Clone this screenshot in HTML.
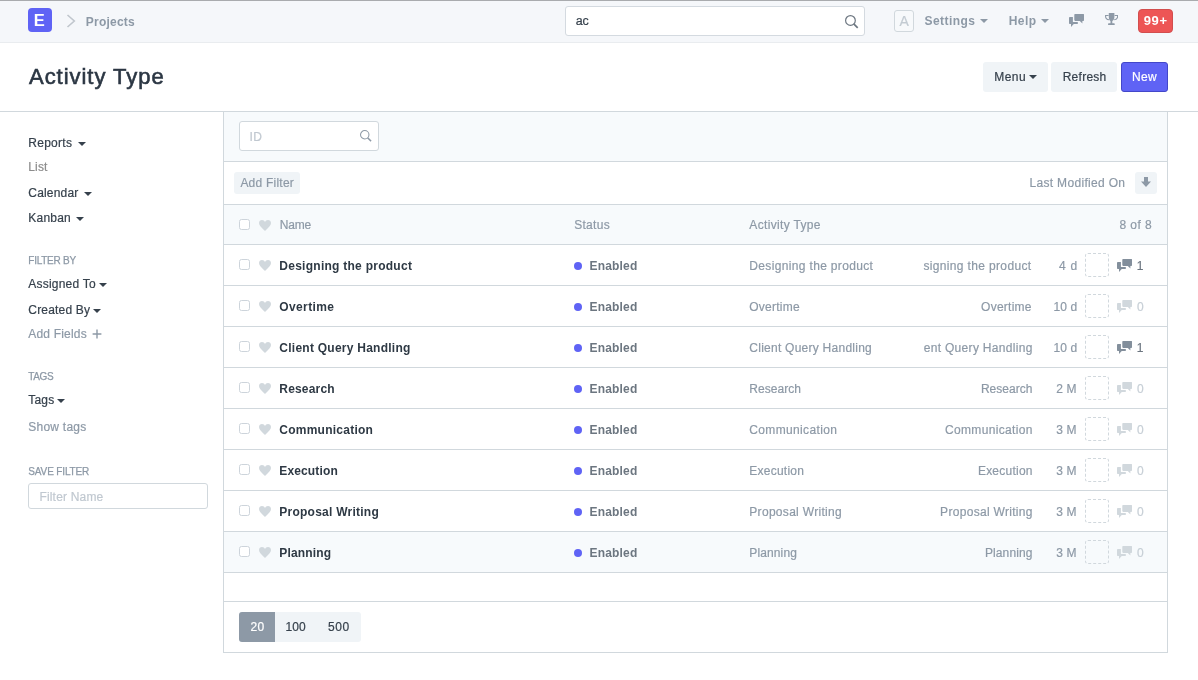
<!DOCTYPE html>
<html><head><meta charset="utf-8"><title>Activity Type</title>
<style>
*{box-sizing:border-box;margin:0;padding:0}
html,body{width:1198px;height:680px;overflow:hidden;background:#fff;font-family:"Liberation Sans",sans-serif;color:#36414c;font-size:12px}
.a{position:absolute}
.t{position:absolute;white-space:nowrap;line-height:1;display:block}
#nav{position:absolute;left:0;top:0;width:1198px;height:43px;background:#f5f7fa;border-top:1px solid #a9abae;border-bottom:1px solid #e9ecef}
#logo{position:absolute;left:28px;top:8px;width:24px;height:24px;border-radius:4px;background:#5f63f5}
#hdr{position:absolute;left:0;top:43px;width:1198px;height:69px;border-bottom:1px solid #d1d8dd;background:#fff}
.btn{position:absolute;border-radius:3px;background:#f0f4f7}
.inp{position:absolute;border:1px solid #d1d8dd;border-radius:3px;background:#fff}
.hl{position:absolute;left:224px;width:943px;height:1px;background:#d1d8dd}
.bg{position:absolute;left:224px;width:943px;background:#f7fafc}
.cb{position:absolute;left:239px;width:11px;height:11px;border:1px solid #cdd4db;border-radius:2.5px;background:#fff}
.dot{position:absolute;left:574px;width:8px;height:8px;border-radius:50%;background:#5f63f5}
.dash{position:absolute;left:1085px;width:24px;height:24px;border:1px dashed #d1d8dd;border-radius:3px}
.car{position:absolute;width:0;height:0;border-left:4px solid transparent;border-right:4px solid transparent;border-top:4px solid #36414c}
#clip{position:absolute;left:0;top:0;width:1198px;height:680px;clip-path:inset(0 0 0 900px)}
</style></head><body>
<div id="nav"></div>
<div id="logo"></div>
<svg class="a" style="left:66px;top:14px" width="10" height="14" viewBox="0 0 10 14"><path d="M1.500 1 L8.300 7 L1.500 13" fill="none" stroke="#c0c6cd" stroke-width="1.600"/></svg>
<div class="inp" style="left:565px;top:6px;width:300px;height:30px;border-color:#d4dae0"></div>
<svg class="a" style="left:845px;top:15.100px;fill:none;stroke:#6c7680" width="14" height="14" viewBox="0 0 14 14"><circle cx="5.450" cy="5.450" r="4.850" fill="none" stroke-width="1.200"/><path d="M8.700 8.900l4 3.900" fill="none" stroke-width="1.700"/></svg>
<div class="a" style="left:894px;top:10px;width:20px;height:22px;border:1px solid #d1d8dd;border-radius:3px;background:#f7f9fb"></div>
<div class="car" style="left:980px;top:19px;border-top-color:#8d99a6"></div>
<div class="car" style="left:1041px;top:19px;border-top-color:#8d99a6"></div>
<svg class="a" style="left:1069px;top:14px;fill:#8d99a6" width="15.400" height="13" viewBox="0 0 15.400 13"><rect x="5.300" y="0" width="9.800" height="6.900" rx=".8"/><path d="M10.300 6.500h3.100v2.900z"/><path d="M.8 3.100h3.100v4.800h4.900v2.100H.8A.8.800 0 0 1 0 9.200V3.900a.8.800 0 0 1 .8-.8z"/><path d="M2 9.600h3.200L2 12.900z"/></svg>
<svg class="a" style="left:1105px;top:12.900px" width="13.200" height="12" viewBox="0 0 13.200 12"><path d="M3.800 0h5.600v4.200c0 2-1.200 3.300-2.100 3.800v2.200h1.800c.3 0 .6.300.6.600V12H3.100v-1.200c0-.3.300-.6.600-.6h1.800V8C4.600 7.500 3.800 6.200 3.800 4.200z" fill="#8d99a6"/><path d="M3.600 2.500H.6v1c0 1.600 1.400 3 3.400 3.300M9.600 2.500h3v1c0 1.600-1.400 3-3.400 3.300" fill="none" stroke="#8d99a6" stroke-width="1.100"/></svg>
<div class="a" style="left:1138px;top:9px;width:35px;height:24px;border-radius:4px;background:#ed5555;border:1px solid #d24e4e"></div>

<div id="hdr"></div>
<div class="btn" style="left:983px;top:62px;width:65px;height:30px"></div>
<div class="car" style="left:1029px;top:75px"></div>
<div class="btn" style="left:1051px;top:62px;width:66px;height:30px"></div>
<div class="btn" style="left:1121px;top:62px;width:47px;height:30px;background:#5f63f5;border:1px solid #4347c9"></div>

<!-- sidebar -->
<div class="car" style="left:78px;top:142px"></div>
<div class="car" style="left:84px;top:192px"></div>
<div class="car" style="left:76px;top:217px"></div>
<div class="car" style="left:99px;top:283px"></div>
<div class="car" style="left:93px;top:309px"></div>
<div class="car" style="left:57px;top:399px"></div>
<svg class="a" style="left:92.200px;top:329px" width="10" height="10" viewBox="0 0 10 10"><path d="M5 .6v8.800M.6 5h8.800" stroke="#8d99a6" stroke-width="1.400" fill="none"/></svg>
<div class="inp" style="left:28px;top:483px;width:180px;height:26px"></div>

<!-- main panel -->
<div class="a" style="left:223px;top:112px;width:1px;height:541px;background:#d1d8dd"></div>
<div class="a" style="left:1167px;top:112px;width:1px;height:541px;background:#d1d8dd"></div>
<div class="bg" style="top:112px;height:49px"></div>
<div class="bg" style="top:205px;height:39px"></div>
<div class="bg" style="top:532px;height:40px"></div>
<div class="hl" style="top:161px"></div>
<div class="hl" style="top:204px"></div>
<div class="hl" style="top:244px"></div>
<div class="hl" style="top:285px"></div>
<div class="hl" style="top:326px"></div>
<div class="hl" style="top:367px"></div>
<div class="hl" style="top:408px"></div>
<div class="hl" style="top:449px"></div>
<div class="hl" style="top:490px"></div>
<div class="hl" style="top:531px"></div>
<div class="hl" style="top:572px"></div>
<div class="hl" style="top:601px"></div>
<div class="hl" style="top:652px;left:223px;width:945px"></div>

<div class="inp" style="left:239px;top:121px;width:140px;height:30px"></div>
<svg class="a" style="left:359.700px;top:130.400px;fill:none;stroke:#8d99a6" width="12.200" height="12.200" viewBox="0 0 14 14"><circle cx="5.450" cy="5.450" r="4.850" fill="none" stroke-width="1.200"/><path d="M8.700 8.900l4 3.900" fill="none" stroke-width="1.700"/></svg>
<div class="btn" style="left:234px;top:172px;width:66px;height:22px"></div>
<div class="btn" style="left:1135px;top:172px;width:22px;height:22px"></div>
<svg class="a" style="left:1141px;top:177px" width="10" height="10" viewBox="0 0 10 10"><path d="M3 0h4v4.400h3L5 10 0 4.400h3z" fill="#8d99a6"/></svg>

<div class="cb" style="top:219px"></div>
<svg class="a" style="left:259px;top:219.500px;fill:#d1d8dd" width="12" height="11" viewBox="0 0 12 11"><path d="M6 11C2.2 7.6 0 5.5 0 3.1 0 1.2 1.3 0 3 0c1.400 0 2.500.8 3 2C6.500.8 7.600 0 9 0c1.700 0 3 1.200 3 3.100 0 2.400-2.200 4.500-6 7.900z"/></svg>
<div class="cb" style="top:259px"></div>
<svg class="a" style="left:259px;top:260px;fill:#d1d8dd" width="12" height="11" viewBox="0 0 12 11"><path d="M6 11C2.2 7.6 0 5.5 0 3.1 0 1.2 1.3 0 3 0c1.400 0 2.500.8 3 2C6.500.8 7.600 0 9 0c1.700 0 3 1.200 3 3.100 0 2.400-2.200 4.500-6 7.900z"/></svg>
<div class="dot" style="top:262px"></div>
<div class="dash" style="top:253px"></div>
<svg class="a" style="left:1117px;top:259px;fill:#838f9c" width="15.4" height="13" viewBox="0 0 15.400 13"><rect x="5.300" y="0" width="9.800" height="6.900" rx=".8"/><path d="M10.300 6.500h3.100v2.900z"/><path d="M.8 3.100h3.100v4.800h4.900v2.100H.8A.8.800 0 0 1 0 9.200V3.900a.8.800 0 0 1 .8-.8z"/><path d="M2 9.600h3.200L2 12.900z"/></svg>
<div class="cb" style="top:300px"></div>
<svg class="a" style="left:259px;top:301px;fill:#d1d8dd" width="12" height="11" viewBox="0 0 12 11"><path d="M6 11C2.2 7.6 0 5.5 0 3.1 0 1.2 1.3 0 3 0c1.400 0 2.500.8 3 2C6.500.8 7.600 0 9 0c1.700 0 3 1.200 3 3.100 0 2.400-2.200 4.500-6 7.900z"/></svg>
<div class="dot" style="top:303px"></div>
<div class="dash" style="top:294px"></div>
<svg class="a" style="left:1117px;top:300px;fill:#d1d8dd" width="15.4" height="13" viewBox="0 0 15.400 13"><rect x="5.300" y="0" width="9.800" height="6.900" rx=".8"/><path d="M10.300 6.500h3.100v2.900z"/><path d="M.8 3.100h3.100v4.800h4.900v2.100H.8A.8.800 0 0 1 0 9.200V3.900a.8.800 0 0 1 .8-.8z"/><path d="M2 9.600h3.200L2 12.900z"/></svg>
<div class="cb" style="top:341px"></div>
<svg class="a" style="left:259px;top:342px;fill:#d1d8dd" width="12" height="11" viewBox="0 0 12 11"><path d="M6 11C2.2 7.6 0 5.5 0 3.1 0 1.2 1.3 0 3 0c1.400 0 2.500.8 3 2C6.500.8 7.600 0 9 0c1.700 0 3 1.200 3 3.100 0 2.400-2.200 4.500-6 7.900z"/></svg>
<div class="dot" style="top:344px"></div>
<div class="dash" style="top:335px"></div>
<svg class="a" style="left:1117px;top:341px;fill:#838f9c" width="15.4" height="13" viewBox="0 0 15.400 13"><rect x="5.300" y="0" width="9.800" height="6.900" rx=".8"/><path d="M10.300 6.500h3.100v2.900z"/><path d="M.8 3.100h3.100v4.800h4.900v2.100H.8A.8.800 0 0 1 0 9.200V3.900a.8.800 0 0 1 .8-.8z"/><path d="M2 9.600h3.200L2 12.900z"/></svg>
<div class="cb" style="top:382px"></div>
<svg class="a" style="left:259px;top:383px;fill:#d1d8dd" width="12" height="11" viewBox="0 0 12 11"><path d="M6 11C2.2 7.6 0 5.5 0 3.1 0 1.2 1.3 0 3 0c1.400 0 2.500.8 3 2C6.500.8 7.600 0 9 0c1.700 0 3 1.200 3 3.100 0 2.400-2.200 4.500-6 7.900z"/></svg>
<div class="dot" style="top:385px"></div>
<div class="dash" style="top:376px"></div>
<svg class="a" style="left:1117px;top:382px;fill:#d1d8dd" width="15.4" height="13" viewBox="0 0 15.400 13"><rect x="5.300" y="0" width="9.800" height="6.900" rx=".8"/><path d="M10.300 6.500h3.100v2.900z"/><path d="M.8 3.100h3.100v4.800h4.900v2.100H.8A.8.800 0 0 1 0 9.200V3.900a.8.800 0 0 1 .8-.8z"/><path d="M2 9.600h3.200L2 12.900z"/></svg>
<div class="cb" style="top:423px"></div>
<svg class="a" style="left:259px;top:424px;fill:#d1d8dd" width="12" height="11" viewBox="0 0 12 11"><path d="M6 11C2.2 7.6 0 5.5 0 3.1 0 1.2 1.3 0 3 0c1.400 0 2.500.8 3 2C6.500.8 7.600 0 9 0c1.700 0 3 1.200 3 3.100 0 2.400-2.200 4.500-6 7.900z"/></svg>
<div class="dot" style="top:426px"></div>
<div class="dash" style="top:417px"></div>
<svg class="a" style="left:1117px;top:423px;fill:#d1d8dd" width="15.4" height="13" viewBox="0 0 15.400 13"><rect x="5.300" y="0" width="9.800" height="6.900" rx=".8"/><path d="M10.300 6.500h3.100v2.900z"/><path d="M.8 3.100h3.100v4.800h4.900v2.100H.8A.8.800 0 0 1 0 9.200V3.900a.8.800 0 0 1 .8-.8z"/><path d="M2 9.600h3.200L2 12.900z"/></svg>
<div class="cb" style="top:464px"></div>
<svg class="a" style="left:259px;top:465px;fill:#d1d8dd" width="12" height="11" viewBox="0 0 12 11"><path d="M6 11C2.2 7.6 0 5.5 0 3.1 0 1.2 1.3 0 3 0c1.400 0 2.500.8 3 2C6.500.8 7.600 0 9 0c1.700 0 3 1.200 3 3.100 0 2.400-2.200 4.500-6 7.900z"/></svg>
<div class="dot" style="top:467px"></div>
<div class="dash" style="top:458px"></div>
<svg class="a" style="left:1117px;top:464px;fill:#d1d8dd" width="15.4" height="13" viewBox="0 0 15.400 13"><rect x="5.300" y="0" width="9.800" height="6.900" rx=".8"/><path d="M10.300 6.500h3.100v2.900z"/><path d="M.8 3.100h3.100v4.800h4.900v2.100H.8A.8.800 0 0 1 0 9.200V3.900a.8.800 0 0 1 .8-.8z"/><path d="M2 9.600h3.200L2 12.900z"/></svg>
<div class="cb" style="top:505px"></div>
<svg class="a" style="left:259px;top:506px;fill:#d1d8dd" width="12" height="11" viewBox="0 0 12 11"><path d="M6 11C2.2 7.6 0 5.5 0 3.1 0 1.2 1.3 0 3 0c1.400 0 2.500.8 3 2C6.500.8 7.600 0 9 0c1.700 0 3 1.200 3 3.100 0 2.400-2.200 4.500-6 7.900z"/></svg>
<div class="dot" style="top:508px"></div>
<div class="dash" style="top:499px"></div>
<svg class="a" style="left:1117px;top:505px;fill:#d1d8dd" width="15.4" height="13" viewBox="0 0 15.400 13"><rect x="5.300" y="0" width="9.800" height="6.900" rx=".8"/><path d="M10.300 6.500h3.100v2.900z"/><path d="M.8 3.100h3.100v4.800h4.900v2.100H.8A.8.800 0 0 1 0 9.200V3.900a.8.800 0 0 1 .8-.8z"/><path d="M2 9.600h3.200L2 12.900z"/></svg>
<div class="cb" style="top:546px"></div>
<svg class="a" style="left:259px;top:547px;fill:#d1d8dd" width="12" height="11" viewBox="0 0 12 11"><path d="M6 11C2.2 7.6 0 5.5 0 3.1 0 1.2 1.3 0 3 0c1.400 0 2.500.8 3 2C6.500.8 7.600 0 9 0c1.700 0 3 1.200 3 3.100 0 2.400-2.200 4.500-6 7.900z"/></svg>
<div class="dot" style="top:549px"></div>
<div class="dash" style="top:540px"></div>
<svg class="a" style="left:1117px;top:546px;fill:#d1d8dd" width="15.4" height="13" viewBox="0 0 15.400 13"><rect x="5.300" y="0" width="9.800" height="6.900" rx=".8"/><path d="M10.300 6.500h3.100v2.900z"/><path d="M.8 3.100h3.100v4.800h4.900v2.100H.8A.8.800 0 0 1 0 9.200V3.900a.8.800 0 0 1 .8-.8z"/><path d="M2 9.600h3.200L2 12.900z"/></svg>

<div class="btn" style="left:239px;top:612px;width:122px;height:30px"></div>
<div class="btn" style="left:239px;top:612px;width:36px;height:30px;background:#8d99a6;border-radius:3px 0 0 3px"></div>

<div id="tl" style="position:absolute;left:0;top:0;width:1198px;height:680px;will-change:transform">
<span class="t" style="left:85.80px;top:16.10px;font-size:12px;color:#8d99a6;letter-spacing:0.217px;font-weight:bold">Projects</span>
<span class="t" style="left:575.70px;top:15.35px;font-size:12.5px;color:#36414c;letter-spacing:-0.052px;-webkit-text-stroke:0.2px #36414c">ac</span>
<span class="t" style="left:924.60px;top:15.20px;font-size:12px;color:#8d99a6;letter-spacing:0.419px;font-weight:bold">Settings</span>
<span class="t" style="left:1008.70px;top:15.20px;font-size:12px;color:#8d99a6;letter-spacing:0.475px;font-weight:bold">Help</span>
<span class="t" style="left:1143.70px;top:14.20px;font-size:13px;color:#fff;letter-spacing:0.620px;font-weight:bold">99+</span>
<span class="t" style="left:899.50px;top:14.00px;font-size:14px;color:#c3cbd2;letter-spacing:0.000px;-webkit-text-stroke:0.2px #c3cbd2">A</span>
<span class="t" style="left:33.70px;top:11.85px;font-size:16.5px;color:#fff;letter-spacing:0.000px;font-weight:bold">E</span>
<span class="t" style="left:29.00px;top:66.10px;font-size:22px;color:#2b3643;letter-spacing:0.963px;-webkit-text-stroke:0.6px #2b3643">Activity Type</span>
<span class="t" style="left:994.20px;top:71.20px;font-size:12px;color:#36414c;letter-spacing:0.485px;-webkit-text-stroke:0.2px #36414c">Menu</span>
<span class="t" style="left:1062.70px;top:71.20px;font-size:12px;color:#36414c;letter-spacing:0.259px;-webkit-text-stroke:0.2px #36414c">Refresh</span>
<span class="t" style="left:1132.00px;top:71.20px;font-size:12px;color:#fff;letter-spacing:0.330px;-webkit-text-stroke:0.2px #fff">New</span>
<span class="t" style="left:28.30px;top:137.00px;font-size:12px;color:#36414c;letter-spacing:0.264px;-webkit-text-stroke:0.2px #36414c">Reports</span>
<span class="t" style="left:28.30px;top:160.90px;font-size:12px;color:#8c8c8c;letter-spacing:0.120px;-webkit-text-stroke:0.2px #8c8c8c">List</span>
<span class="t" style="left:28.30px;top:187.10px;font-size:12px;color:#36414c;letter-spacing:0.186px;-webkit-text-stroke:0.2px #36414c">Calendar</span>
<span class="t" style="left:28.30px;top:211.60px;font-size:12px;color:#36414c;letter-spacing:0.220px;-webkit-text-stroke:0.2px #36414c">Kanban</span>
<span class="t" style="left:28.30px;top:255.50px;font-size:10px;color:#8d99a6;letter-spacing:-0.257px;-webkit-text-stroke:0.25px #8d99a6">FILTER BY</span>
<span class="t" style="left:28.30px;top:278.20px;font-size:12px;color:#36414c;letter-spacing:0.210px;-webkit-text-stroke:0.2px #36414c">Assigned To</span>
<span class="t" style="left:28.30px;top:304.00px;font-size:12px;color:#36414c;letter-spacing:0.186px;-webkit-text-stroke:0.2px #36414c">Created By</span>
<span class="t" style="left:28.30px;top:327.80px;font-size:12px;color:#8d99a6;letter-spacing:0.189px;-webkit-text-stroke:0.2px #8d99a6">Add Fields</span>
<span class="t" style="left:28.30px;top:371.80px;font-size:10px;color:#8d99a6;letter-spacing:-0.371px;-webkit-text-stroke:0.25px #8d99a6">TAGS</span>
<span class="t" style="left:28.30px;top:394.00px;font-size:12px;color:#36414c;letter-spacing:0.184px;-webkit-text-stroke:0.2px #36414c">Tags</span>
<span class="t" style="left:28.30px;top:420.90px;font-size:12px;color:#8d99a6;letter-spacing:0.233px;-webkit-text-stroke:0.2px #8d99a6">Show tags</span>
<span class="t" style="left:28.30px;top:466.50px;font-size:10px;color:#8d99a6;letter-spacing:-0.140px;-webkit-text-stroke:0.25px #8d99a6">SAVE FILTER</span>
<span class="t" style="left:39.40px;top:491.00px;font-size:12px;color:#c0c8d0;letter-spacing:0.186px;-webkit-text-stroke:0.2px #c0c8d0">Filter Name</span>
<span class="t" style="left:249.50px;top:131.00px;font-size:12px;color:#c0c8d0;letter-spacing:0.366px;-webkit-text-stroke:0.2px #c0c8d0">ID</span>
<span class="t" style="left:240.40px;top:177.30px;font-size:12px;color:#8d99a6;letter-spacing:0.227px;-webkit-text-stroke:0.2px #8d99a6">Add Filter</span>
<span class="t" style="left:1029.50px;top:177.30px;font-size:12px;color:#8d99a6;letter-spacing:0.317px;-webkit-text-stroke:0.2px #8d99a6">Last Modified On</span>
<span class="t" style="left:279.70px;top:219.30px;font-size:12px;color:#8d99a6;letter-spacing:-0.179px;-webkit-text-stroke:0.2px #8d99a6">Name</span>
<span class="t" style="left:574.20px;top:219.30px;font-size:12px;color:#8d99a6;letter-spacing:0.296px;-webkit-text-stroke:0.2px #8d99a6">Status</span>
<span class="t" style="left:749.30px;top:219.30px;font-size:12px;color:#8d99a6;letter-spacing:0.335px;-webkit-text-stroke:0.2px #8d99a6">Activity Type</span>
<span class="t" style="left:1119.50px;top:219.30px;font-size:12px;color:#8d99a6;letter-spacing:0.430px;-webkit-text-stroke:0.2px #8d99a6">8 of 8</span>
<span class="t" style="left:250.40px;top:621.00px;font-size:12px;color:#fff;letter-spacing:0.426px;-webkit-text-stroke:0.2px #fff">20</span>
<span class="t" style="left:285.60px;top:621.00px;font-size:12px;color:#36414c;letter-spacing:0.076px;-webkit-text-stroke:0.2px #36414c">100</span>
<span class="t" style="left:328.00px;top:621.00px;font-size:12px;color:#36414c;letter-spacing:0.626px;-webkit-text-stroke:0.2px #36414c">500</span>
<span class="t" style="left:279.30px;top:260.30px;font-size:12px;color:#2e3944;letter-spacing:0.263px;font-weight:bold">Designing the product</span>
<span class="t" style="left:589.50px;top:260.30px;font-size:12px;color:#6c7680;letter-spacing:0.176px;font-weight:bold">Enabled</span>
<span class="t" style="left:749.30px;top:260.30px;font-size:12px;color:#8d99a6;letter-spacing:0.345px;-webkit-text-stroke:0.2px #8d99a6">Designing the product</span>
<span class="t" style="left:1059.00px;top:260.30px;font-size:12px;color:#8d99a6;letter-spacing:0.746px;-webkit-text-stroke:0.2px #8d99a6">4 d</span>
<span class="t" style="left:1136.80px;top:260.30px;font-size:12px;color:#6c7680;letter-spacing:0.000px;-webkit-text-stroke:0.2px #6c7680">1</span>
<span class="t" style="left:279.30px;top:301.30px;font-size:12px;color:#2e3944;letter-spacing:0.378px;font-weight:bold">Overtime</span>
<span class="t" style="left:589.50px;top:301.30px;font-size:12px;color:#6c7680;letter-spacing:0.176px;font-weight:bold">Enabled</span>
<span class="t" style="left:749.30px;top:301.30px;font-size:12px;color:#8d99a6;letter-spacing:0.243px;-webkit-text-stroke:0.2px #8d99a6">Overtime</span>
<span class="t" style="left:1053.50px;top:301.30px;font-size:12px;color:#8d99a6;letter-spacing:0.106px;-webkit-text-stroke:0.2px #8d99a6">10 d</span>
<span class="t" style="left:1136.90px;top:301.30px;font-size:12px;color:#c7cfd6;letter-spacing:0.000px;-webkit-text-stroke:0.2px #c7cfd6">0</span>
<span class="t" style="left:279.30px;top:342.30px;font-size:12px;color:#2e3944;letter-spacing:0.251px;font-weight:bold">Client Query Handling</span>
<span class="t" style="left:589.50px;top:342.30px;font-size:12px;color:#6c7680;letter-spacing:0.176px;font-weight:bold">Enabled</span>
<span class="t" style="left:749.30px;top:342.30px;font-size:12px;color:#8d99a6;letter-spacing:0.254px;-webkit-text-stroke:0.2px #8d99a6">Client Query Handling</span>
<span class="t" style="left:1053.50px;top:342.30px;font-size:12px;color:#8d99a6;letter-spacing:0.106px;-webkit-text-stroke:0.2px #8d99a6">10 d</span>
<span class="t" style="left:1136.80px;top:342.30px;font-size:12px;color:#6c7680;letter-spacing:0.000px;-webkit-text-stroke:0.2px #6c7680">1</span>
<span class="t" style="left:279.30px;top:383.30px;font-size:12px;color:#2e3944;letter-spacing:0.185px;font-weight:bold">Research</span>
<span class="t" style="left:589.50px;top:383.30px;font-size:12px;color:#6c7680;letter-spacing:0.176px;font-weight:bold">Enabled</span>
<span class="t" style="left:749.30px;top:383.30px;font-size:12px;color:#8d99a6;letter-spacing:0.031px;-webkit-text-stroke:0.2px #8d99a6">Research</span>
<span class="t" style="left:1056.30px;top:383.30px;font-size:12px;color:#8d99a6;letter-spacing:0.096px;-webkit-text-stroke:0.2px #8d99a6">2 M</span>
<span class="t" style="left:1136.90px;top:383.30px;font-size:12px;color:#c7cfd6;letter-spacing:0.000px;-webkit-text-stroke:0.2px #c7cfd6">0</span>
<span class="t" style="left:279.30px;top:424.30px;font-size:12px;color:#2e3944;letter-spacing:0.247px;font-weight:bold">Communication</span>
<span class="t" style="left:589.50px;top:424.30px;font-size:12px;color:#6c7680;letter-spacing:0.176px;font-weight:bold">Enabled</span>
<span class="t" style="left:749.30px;top:424.30px;font-size:12px;color:#8d99a6;letter-spacing:0.351px;-webkit-text-stroke:0.2px #8d99a6">Communication</span>
<span class="t" style="left:1056.30px;top:424.30px;font-size:12px;color:#8d99a6;letter-spacing:0.096px;-webkit-text-stroke:0.2px #8d99a6">3 M</span>
<span class="t" style="left:1136.90px;top:424.30px;font-size:12px;color:#c7cfd6;letter-spacing:0.000px;-webkit-text-stroke:0.2px #c7cfd6">0</span>
<span class="t" style="left:279.30px;top:465.30px;font-size:12px;color:#2e3944;letter-spacing:0.136px;font-weight:bold">Execution</span>
<span class="t" style="left:589.50px;top:465.30px;font-size:12px;color:#6c7680;letter-spacing:0.176px;font-weight:bold">Enabled</span>
<span class="t" style="left:749.30px;top:465.30px;font-size:12px;color:#8d99a6;letter-spacing:0.234px;-webkit-text-stroke:0.2px #8d99a6">Execution</span>
<span class="t" style="left:1056.30px;top:465.30px;font-size:12px;color:#8d99a6;letter-spacing:0.096px;-webkit-text-stroke:0.2px #8d99a6">3 M</span>
<span class="t" style="left:1136.90px;top:465.30px;font-size:12px;color:#c7cfd6;letter-spacing:0.000px;-webkit-text-stroke:0.2px #c7cfd6">0</span>
<span class="t" style="left:279.30px;top:506.30px;font-size:12px;color:#2e3944;letter-spacing:0.243px;font-weight:bold">Proposal Writing</span>
<span class="t" style="left:589.50px;top:506.30px;font-size:12px;color:#6c7680;letter-spacing:0.176px;font-weight:bold">Enabled</span>
<span class="t" style="left:749.30px;top:506.30px;font-size:12px;color:#8d99a6;letter-spacing:0.304px;-webkit-text-stroke:0.2px #8d99a6">Proposal Writing</span>
<span class="t" style="left:1056.30px;top:506.30px;font-size:12px;color:#8d99a6;letter-spacing:0.096px;-webkit-text-stroke:0.2px #8d99a6">3 M</span>
<span class="t" style="left:1136.90px;top:506.30px;font-size:12px;color:#c7cfd6;letter-spacing:0.000px;-webkit-text-stroke:0.2px #c7cfd6">0</span>
<span class="t" style="left:279.30px;top:547.30px;font-size:12px;color:#2e3944;letter-spacing:0.152px;font-weight:bold">Planning</span>
<span class="t" style="left:589.50px;top:547.30px;font-size:12px;color:#6c7680;letter-spacing:0.176px;font-weight:bold">Enabled</span>
<span class="t" style="left:749.30px;top:547.30px;font-size:12px;color:#8d99a6;letter-spacing:0.124px;-webkit-text-stroke:0.2px #8d99a6">Planning</span>
<span class="t" style="left:1056.30px;top:547.30px;font-size:12px;color:#8d99a6;letter-spacing:0.096px;-webkit-text-stroke:0.2px #8d99a6">3 M</span>
<span class="t" style="left:1136.90px;top:547.30px;font-size:12px;color:#c7cfd6;letter-spacing:0.000px;-webkit-text-stroke:0.2px #c7cfd6">0</span>
</div>
<div id="clip">
<span class="t" style="left:923.40px;top:260.30px;font-size:12px;color:#8d99a6;letter-spacing:0.352px;-webkit-text-stroke:0.2px #8d99a6">signing the product</span>
<span class="t" style="left:981.10px;top:301.30px;font-size:12px;color:#8d99a6;letter-spacing:0.243px;-webkit-text-stroke:0.2px #8d99a6">Overtime</span>
<span class="t" style="left:923.70px;top:342.30px;font-size:12px;color:#8d99a6;letter-spacing:0.316px;-webkit-text-stroke:0.2px #8d99a6">ent Query Handling</span>
<span class="t" style="left:980.90px;top:383.30px;font-size:12px;color:#8d99a6;letter-spacing:0.031px;-webkit-text-stroke:0.2px #8d99a6">Research</span>
<span class="t" style="left:944.90px;top:424.30px;font-size:12px;color:#8d99a6;letter-spacing:0.351px;-webkit-text-stroke:0.2px #8d99a6">Communication</span>
<span class="t" style="left:977.90px;top:465.30px;font-size:12px;color:#8d99a6;letter-spacing:0.234px;-webkit-text-stroke:0.2px #8d99a6">Execution</span>
<span class="t" style="left:940.10px;top:506.30px;font-size:12px;color:#8d99a6;letter-spacing:0.304px;-webkit-text-stroke:0.2px #8d99a6">Proposal Writing</span>
<span class="t" style="left:984.90px;top:547.30px;font-size:12px;color:#8d99a6;letter-spacing:0.124px;-webkit-text-stroke:0.2px #8d99a6">Planning</span>
</div>
</body></html>
